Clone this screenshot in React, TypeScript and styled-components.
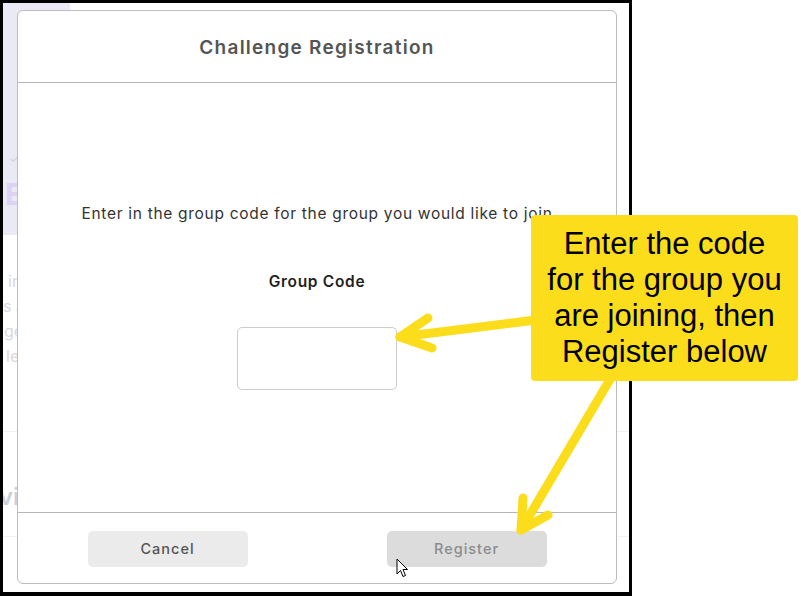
import React from "react";
import styled, { createGlobalStyle } from "styled-components";

const GlobalStyle = createGlobalStyle`
  html, body { margin: 0; padding: 0; background: #ffffff; }
  body { width: 801px; height: 596px; overflow: hidden; }
  * { box-sizing: border-box; }
`;

const UI_FONT = `"Inter", "Open Sans", "DejaVu Sans", sans-serif`;

const Stage = styled.div`
  position: relative;
  width: 801px;
  height: 596px;
  background: #ffffff;
  overflow: hidden;
`;

const Frame = styled.div`
  position: relative;
  width: 632px;
  height: 596px;
  border: 3px solid #000;
  border-bottom-width: 4px;
  background: #ffffff;
  overflow: hidden;
`;

/* ---------- faded page behind the dialog ---------- */
const BackPage = styled.div`
  display: flex;
  flex-direction: column;
  font-family: ${UI_FONT};
`;

const Banner = styled.div`
  width: 67px;
  height: 232px;
  background: #e9eaf4;
  display: flex;
  flex-direction: column;
  padding: 150px 0 0 2px;
  gap: 14px;
`;

const BannerCheck = styled.span`
  color: #cfd1dc;
  font-size: 12px;
  line-height: 12px;
  padding-left: 4px;
`;

const BannerLetter = styled.span`
  color: #ddd2f3;
  font-size: 30px;
  font-weight: 700;
  line-height: 30px;
`;

const FadedPara = styled.div`
  display: flex;
  flex-direction: column;
  margin-top: 34px;
`;

const FadedLine = styled.span<{ $indent: number; $tone?: string }>`
  font-size: 16px;
  line-height: 25px;
  color: ${(p) => p.$tone || "#d6d9e2"};
  padding-left: ${(p) => p.$indent}px;
  white-space: nowrap;
`;

const FadedRule = styled.div`
  height: 1px;
  background: #eef0f3;
  margin-top: 62px;
`;

const FadedHeading = styled.div`
  margin-top: 50px;
  margin-left: -4px;
  font-size: 24px;
  line-height: 30px;
  font-weight: 600;
  color: #ccd0d9;
`;

const FadedRule2 = styled.div`
  height: 1px;
  background: #f1f2f5;
  margin-top: 24px;
`;

/* ---------- dialog ---------- */
const Modal = styled.div`
  position: absolute;
  left: 14px;
  top: 7px;
  width: 600px;
  height: 574px;
  border: 1px solid #bdbdbd;
  border-radius: 6px;
  background: #ffffff;
  display: flex;
  flex-direction: column;
  font-family: ${UI_FONT};
`;

const Header = styled.div`
  height: 72px;
  border-bottom: 1px solid #b5b5b5;
  display: flex;
  align-items: center;
  justify-content: center;
  padding-top: 2px;
`;

const Title = styled.h2`
  margin: 0;
  font-size: 19px;
  font-weight: 600;
  color: #555555;
  letter-spacing: 1.25px;
`;

const Body = styled.div`
  flex: 1;
  display: flex;
  flex-direction: column;
  align-items: center;
  justify-content: center;
  padding-bottom: 1px;
`;

const Prompt = styled.p`
  margin: 0;
  font-size: 15.5px;
  line-height: 18px;
  color: #333333;
  letter-spacing: 0.7px;
`;

const FieldLabel = styled.label`
  margin-top: 50px;
  font-size: 15.5px;
  line-height: 18px;
  font-weight: 600;
  color: #1f1f1f;
  letter-spacing: 0.7px;
`;

const CodeInput = styled.input`
  margin-top: 36px;
  width: 160px;
  height: 63px;
  border: 1px solid #cccccc;
  border-radius: 5px;
  background: #ffffff;
  outline: none;
`;

const Footer = styled.div`
  height: 71px;
  border-top: 1px solid #b5b5b5;
  display: grid;
  grid-template-columns: 1fr 1fr;
  align-items: center;
  justify-items: center;
  padding-top: 1px;
`;

const Button = styled.button<{ $primary?: boolean }>`
  width: 160px;
  height: 36px;
  border: none;
  border-radius: 5px;
  font-family: ${UI_FONT};
  font-size: 14.5px;
  font-weight: 500;
  letter-spacing: 1px;
  background: ${(p) => (p.$primary ? "#dcdcdc" : "#ebebeb")};
  color: ${(p) => (p.$primary ? "#8c8c8c" : "#555555")};
`;

/* ---------- annotation ---------- */
const Callout = styled.div`
  position: absolute;
  left: 531px;
  top: 215px;
  width: 267px;
  height: 166px;
  background: #fbdd1b;
  border-radius: 4px;
  display: flex;
  align-items: center;
  justify-content: center;
  text-align: center;
  font-family: "Liberation Sans", Arial, sans-serif;
  font-size: 31px;
  line-height: 36px;
  color: #000000;
`;

const Overlay = styled.svg`
  position: absolute;
  left: 0;
  top: 0;
  pointer-events: none;
`;

const Cursor = styled.svg`
  position: absolute;
  left: 396px;
  top: 558px;
`;

export default function App() {
  return (
    <>
      <GlobalStyle />
      <Stage>
        <Frame>
          <BackPage>
            <Banner>
              <BannerCheck>✓</BannerCheck>
              <BannerLetter>E</BannerLetter>
            </Banner>
            <FadedPara>
              <FadedLine $indent={5}>in the challenge</FadedLine>
              <FadedLine $indent={0}>s a team</FadedLine>
              <FadedLine $indent={1}>ge together</FadedLine>
              <FadedLine $indent={3} $tone="#e2d6d2">le more</FadedLine>
            </FadedPara>
            <FadedRule />
            <FadedHeading>vi</FadedHeading>
            <FadedRule2 />
          </BackPage>

          <Modal>
            <Header>
              <Title>Challenge Registration</Title>
            </Header>
            <Body>
              <Prompt>Enter in the group code for the group you would like to join</Prompt>
              <FieldLabel htmlFor="group-code">Group Code</FieldLabel>
              <CodeInput id="group-code" type="text" />
            </Body>
            <Footer>
              <Button>Cancel</Button>
              <Button $primary>Register</Button>
            </Footer>
          </Modal>
        </Frame>

        <Overlay width="801" height="596" viewBox="0 0 801 596">
          <g
            stroke="#fbdd1b"
            strokeWidth="9"
            strokeLinecap="round"
            strokeLinejoin="round"
            fill="none"
          >
            <line x1="536" y1="320" x2="400" y2="337" />
            <polyline points="428,318 400,337 432,348" />
            <line x1="612" y1="376" x2="521" y2="530" />
            <polyline points="523,498 521,530 548,515" />
          </g>
        </Overlay>

        <Callout>
          Enter the code
          <br />
          for the group you
          <br />
          are joining, then
          <br />
          Register below
        </Callout>

        <Cursor width="13" height="21" viewBox="0 0 13 21">
          <path
            d="M1 1 L1 16 L4.5 12.5 L7 18.5 L9.5 17.5 L7 11.5 L11.5 11.5 Z"
            fill="#ffffff"
            stroke="#000000"
            strokeWidth="1"
            strokeLinejoin="miter"
          />
        </Cursor>
      </Stage>
    </>
  );
}
